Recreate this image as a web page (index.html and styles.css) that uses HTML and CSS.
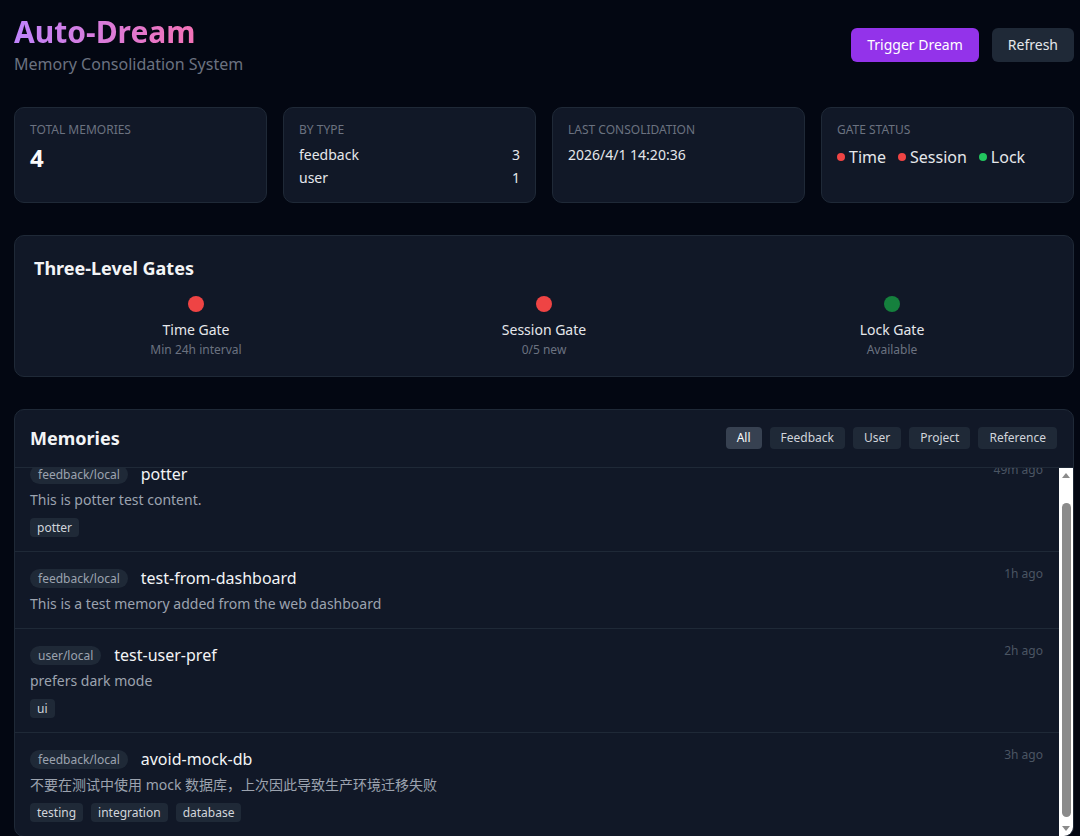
FILE: index.html
```html
<!DOCTYPE html>
<html>
<head lang="en">
    <meta charset="UTF-8">
    <link rel="stylesheet" href="styles.css">
    <title>Auto-Dream</title>
</head>
<body>
<div class="page">
    <div class="header">
        <div class="brand">
            <h1 class="title">Auto-Dream</h1>
            <div class="subtitle">Memory Consolidation System</div>
        </div>
        <div class="actions">
            <button class="btn btn_primary">Trigger Dream</button>
            <button class="btn">Refresh</button>
        </div>
    </div>

    <div class="stats">
        <div class="card">
            <div class="card_label">Total Memories</div>
            <div class="card_value">4</div>
        </div>
        <div class="card">
            <div class="card_label">By Type</div>
            <div class="type_row"><span>feedback</span><span>3</span></div>
            <div class="type_row"><span>user</span><span>1</span></div>
        </div>
        <div class="card">
            <div class="card_label">Last Consolidation</div>
            <div class="card_text">2026/4/1 14:20:36</div>
        </div>
        <div class="card">
            <div class="card_label">Gate Status</div>
            <div class="gate_status">
                <span class="status"><i class="dot red"></i>Time</span>
                <span class="status"><i class="dot red"></i>Session</span>
                <span class="status"><i class="dot green"></i>Lock</span>
            </div>
        </div>
    </div>

    <div class="panel gates">
        <h2 class="panel_title">Three-Level Gates</h2>
        <div class="gate_grid">
            <div class="gate">
                <div class="gate_dot red"></div>
                <div class="gate_name">Time Gate</div>
                <div class="gate_sub">Min 24h interval</div>
            </div>
            <div class="gate">
                <div class="gate_dot red"></div>
                <div class="gate_name">Session Gate</div>
                <div class="gate_sub">0/5 new</div>
            </div>
            <div class="gate">
                <div class="gate_dot dark_green"></div>
                <div class="gate_name">Lock Gate</div>
                <div class="gate_sub">Available</div>
            </div>
        </div>
    </div>

    <div class="panel memories">
        <div class="memories_head">
            <h2 class="panel_title">Memories</h2>
            <div class="filters">
                <button class="filter active">All</button>
                <button class="filter">Feedback</button>
                <button class="filter">User</button>
                <button class="filter">Project</button>
                <button class="filter">Reference</button>
            </div>
        </div>
        <div class="list_wrap">
            <div class="memory_list" id="list">
                <div class="memory">
                    <div class="memory_top">
                        <div class="memory_name"><span class="badge">feedback/local</span><span class="name">potter</span></div>
                        <span class="time">49m ago</span>
                    </div>
                    <div class="content">This is potter test content.</div>
                    <div class="tags"><span class="tag">potter</span></div>
                </div>
                <div class="memory">
                    <div class="memory_top">
                        <div class="memory_name"><span class="badge">feedback/local</span><span class="name">test-from-dashboard</span></div>
                        <span class="time">1h ago</span>
                    </div>
                    <div class="content">This is a test memory added from the web dashboard</div>
                </div>
                <div class="memory">
                    <div class="memory_top">
                        <div class="memory_name"><span class="badge">user/local</span><span class="name">test-user-pref</span></div>
                        <span class="time">2h ago</span>
                    </div>
                    <div class="content">prefers dark mode</div>
                    <div class="tags"><span class="tag">ui</span></div>
                </div>
                <div class="memory">
                    <div class="memory_top">
                        <div class="memory_name"><span class="badge">feedback/local</span><span class="name">avoid-mock-db</span></div>
                        <span class="time">3h ago</span>
                    </div>
                    <div class="content">不要在测试中使用 mock 数据库，上次因此导致生产环境迁移失败</div>
                    <div class="tags"><span class="tag">testing</span><span class="tag">integration</span><span class="tag">database</span></div>
                </div>
            </div>
            <div class="scrollbar">
                <div class="arrow"><i class="tri up"></i></div>
                <div class="track"><div class="thumb"></div></div>
                <div class="arrow"><i class="tri down"></i></div>
            </div>
        </div>
    </div>
</div>
<script>
    document.getElementById('list').scrollTop = 20;
</script>
</body>
</html>
```

FILE: styles.css
```css
* {
    padding: 0;
    margin: 0;
    box-sizing: border-box;
}

html, body {
    height: 100%;
    overflow: hidden;
}

body {
    background: #030712;
    color: #e5e7eb;
    font-family: "Noto Sans", "Noto Sans CJK SC", sans-serif;
}

.page {
    padding: 14px 6px 0 14px;
}

.header {
    display: flex;
    justify-content: space-between;
    align-items: center;
}

.title {
    display: inline-block;
    font-size: 30px;
    line-height: 36px;
    font-weight: 700;
    background: linear-gradient(90deg, #c084fc, #f472b6);
    -webkit-background-clip: text;
    background-clip: text;
    color: transparent;
}

.subtitle {
    margin-top: 2px;
    font-size: 16px;
    line-height: 24px;
    color: #6b7280;
}

.actions {
    display: flex;
    gap: 13px;
}

.btn {
    font-family: inherit;
    font-size: 14px;
    line-height: 18px;
    padding: 8px 16px;
    border: none;
    border-radius: 6px;
    background: #1f2937;
    color: #e5e7eb;
}

.btn_primary {
    background: #9333ea;
    color: #fff;
}

.stats {
    margin-top: 31px;
    display: grid;
    grid-template-columns: repeat(4, 1fr);
    gap: 16px;
}

.card {
    height: 96px;
    padding: 16px 15px;
    background: #111827;
    border: 1px solid #1f2937;
    border-radius: 10px;
}

.card_label {
    font-size: 12px;
    line-height: 12px;
    text-transform: uppercase;
    color: #6b7280;
    margin-bottom: 9px;
}

.card_value {
    font-size: 24px;
    line-height: 26px;
    font-weight: 700;
    color: #f9fafb;
}

.type_row {
    display: flex;
    justify-content: space-between;
    font-size: 14px;
    line-height: 20px;
    margin-top: 3px;
}

.card_text {
    font-size: 14px;
    line-height: 20px;
    margin-top: 3px;
}

.gate_status {
    display: flex;
    gap: 12px;
    font-size: 16px;
    line-height: 24px;
}

.status {
    display: flex;
    align-items: center;
    gap: 4px;
}

.dot {
    width: 8px;
    height: 8px;
    border-radius: 50%;
}

.red {
    background: #ef4444;
}

.green {
    background: #22c55e;
}

.dark_green {
    background: #15803d;
}

.panel {
    margin-top: 32px;
    background: #111827;
    border: 1px solid #1f2937;
    border-radius: 10px;
    overflow: hidden;
}

.panel_title {
    font-size: 18px;
    line-height: 24px;
    font-weight: 700;
    color: #f3f4f6;
}

.gates {
    padding: 20px 19px 18px;
}

.gate_grid {
    margin-top: 16px;
    display: grid;
    grid-template-columns: repeat(3, 1fr);
    gap: 24px;
    text-align: center;
}

.gate_dot {
    width: 16px;
    height: 16px;
    border-radius: 50%;
    margin: 0 auto 8px;
}

.gate_name {
    font-size: 14px;
    line-height: 20px;
    color: #e5e7eb;
}

.gate_sub {
    margin-top: 2px;
    font-size: 12px;
    line-height: 16px;
    color: #6b7280;
}

.memories_head {
    display: flex;
    justify-content: space-between;
    align-items: center;
    padding: 16px 16px 17px 15px;
    border-bottom: 1px solid #1f2937;
}

.filters {
    display: flex;
    gap: 8px;
}

.filter {
    font-family: inherit;
    font-size: 12px;
    line-height: 16px;
    padding: 3px 11px;
    border: none;
    border-radius: 4px;
    background: #1f2937;
    color: #d1d5db;
}

.filter.active {
    background: #374151;
    color: #f9fafb;
}

.list_wrap {
    display: flex;
    height: 368px;
}

.memory_list {
    flex: 1;
    overflow: hidden;
}

.scrollbar {
    width: 14px;
    height: 368px;
    background: #fff;
    display: flex;
    flex-direction: column;
}

.arrow {
    height: 15px;
    display: flex;
    align-items: center;
    justify-content: center;
}

.tri {
    width: 0;
    height: 0;
    border-left: 4px solid transparent;
    border-right: 4px solid transparent;
}

.tri.up {
    border-bottom: 5px solid #8b8b8b;
}

.tri.down {
    border-top: 5px solid #8b8b8b;
}

.track {
    flex: 1;
    display: flex;
    justify-content: center;
    padding-top: 20px;
}

.thumb {
    width: 9px;
    height: 314px;
    border-radius: 5px;
    background: #8b8b8b;
}

.memory {
    padding: 14px 16px 14px 15px;
    border-bottom: 1px solid #1f2937;
}

.memory_top {
    display: flex;
    justify-content: space-between;
    align-items: flex-start;
}

.memory_name {
    display: flex;
    align-items: center;
    gap: 13px;
    height: 24px;
}

.badge {
    font-size: 12px;
    line-height: 15px;
    padding: 2px 8px;
    border-radius: 10px;
    background: #1f2937;
    color: #9ca3af;
}

.name {
    font-size: 16px;
    line-height: 24px;
    font-weight: 400;
    color: #f3f4f6;
}

.time {
    font-size: 12px;
    line-height: 16px;
    color: #4b5563;
}

.content {
    margin-top: 4px;
    font-size: 14px;
    line-height: 20px;
    color: #9ca3af;
}

.tags {
    margin-top: 8px;
    display: flex;
    gap: 8px;
}

.tag {
    font-size: 12px;
    line-height: 15px;
    padding: 2px 7px;
    border-radius: 4px;
    background: #1f2937;
    color: #d1d5db;
}
```
